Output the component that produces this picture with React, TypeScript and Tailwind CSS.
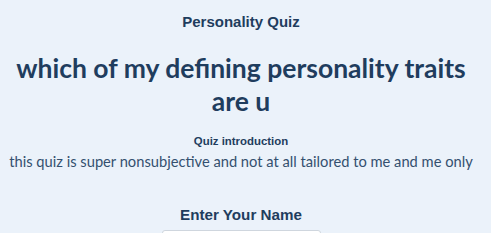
import React from "react";

export default function App() {
  return (
    <div className="flex h-[233px] w-[500px] overflow-hidden bg-white">
      <div className="flex w-[491px] shrink-0 flex-col items-center bg-[#ebf2fa] pr-[9px] text-[#1f3d5e]">
        <h2 className="mt-[14px] text-[15px] font-bold leading-[16px] [font-family:'Liberation_Sans',Arial,sans-serif]">
          Personality Quiz
        </h2>
        <h1 className="mt-[22px] px-[6px] text-center text-[26.5px] font-bold leading-[33px] [font-family:Lato,'Noto_Sans',sans-serif]">
          which of my defining personality traits are u
        </h1>
        <h3 className="mt-[16px] text-[11.4px] font-bold leading-[14px] [font-family:'Liberation_Sans',Arial,sans-serif]">
          Quiz introduction
        </h3>
        <p className="mt-[4px] whitespace-nowrap text-[14.7px] leading-[18px] text-[#34506f] [font-family:Lato,'Noto_Sans',sans-serif]">
          this quiz is super nonsubjective and not at all tailored to me and me only
        </p>
        <label className="mt-[36px] text-[15.2px] font-bold leading-[18px] [font-family:'Liberation_Sans',Arial,sans-serif]">
          Enter Your Name
        </label>
        <input
          type="text"
          className="mt-[6px] h-[28px] w-[159px] shrink-0 rounded-[3px] border border-[#cfd6de] bg-white"
        />
      </div>
    </div>
  );
}
